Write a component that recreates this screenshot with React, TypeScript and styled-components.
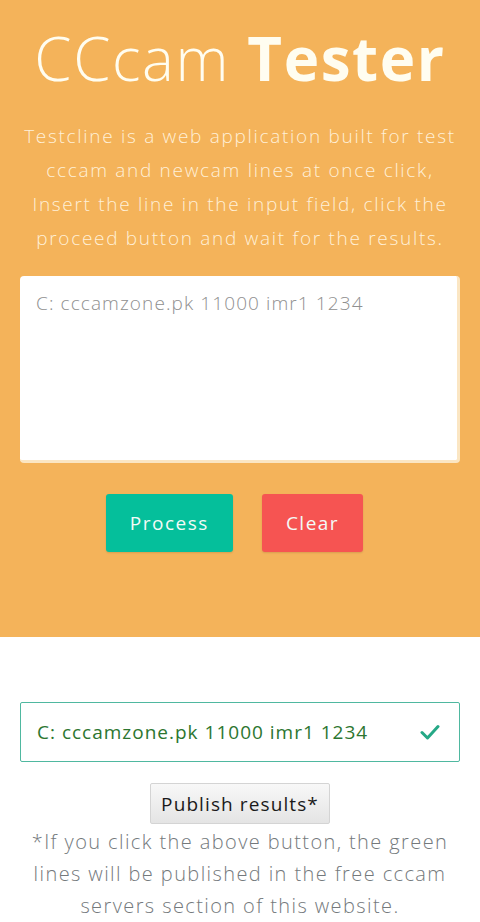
import styled, { createGlobalStyle } from 'styled-components'

const GlobalStyle = createGlobalStyle`
  html, body {
    margin: 0;
    padding: 0;
    background: #ffffff;
  }
  body {
    font-family: "Open Sans", "Noto Sans", sans-serif;
  }
`

const Hero = styled.section`
  background: #f4b35a;
  padding: 20px 20px 85px;
  display: flex;
  flex-direction: column;
  align-items: center;
`

const Title = styled.h1`
  margin: 0;
  font-size: 60px;
  line-height: 76px;
  font-weight: 300;
  letter-spacing: 1.6px;
  color: #fffdf0;
  text-align: center;
  white-space: nowrap;
  strong {
    font-weight: 700;
  }
`

const Intro = styled.p`
  margin: 23px 0 0;
  font-size: 19px;
  line-height: 34px;
  font-weight: 300;
  letter-spacing: 1.7px;
  color: #fff0d8;
  text-align: center;
`

const LineInput = styled.textarea`
  box-sizing: border-box;
  margin-top: 21px;
  width: 100%;
  height: 187px;
  padding: 14px 16px;
  border: none;
  border-right: 3px solid #fbe6c3;
  border-bottom: 3px solid #fbe6c3;
  border-radius: 4px;
  background: #ffffff;
  resize: none;
  font-family: inherit;
  font-size: 19px;
  font-weight: 300;
  letter-spacing: 1.1px;
  color: #555;
  &::placeholder {
    color: #8f8f8f;
  }
`

const Actions = styled.div`
  display: flex;
  gap: 29px;
  margin-top: 31px;
  margin-right: 11px;
`

const ActionButton = styled.button<{ $tone: 'go' | 'stop' }>`
  height: 58px;
  padding: 0 24px;
  border: none;
  border-radius: 3px;
  background: ${p => (p.$tone === 'go' ? '#05bf9b' : '#f65452')};
  color: #f3fbf7;
  font-family: inherit;
  font-size: 19px;
  font-weight: 400;
  letter-spacing: 1.5px;
  box-shadow: 0 1px 2px rgba(0, 0, 0, 0.12);
`

const Results = styled.section`
  padding: 65px 20px 0;
  display: flex;
  flex-direction: column;
  align-items: center;
`

const ResultRow = styled.div`
  box-sizing: border-box;
  width: 100%;
  height: 60px;
  display: flex;
  align-items: center;
  justify-content: space-between;
  padding: 0 19px 0 16px;
  border: 1px solid #4fb8a0;
  border-radius: 2px;
  color: #2c7630;
  font-size: 19px;
  font-weight: 400;
  letter-spacing: 1px;
`

const PublishButton = styled.button`
  margin-top: 21px;
  height: 41px;
  padding: 0 10px;
  border: 1px solid #d4d4d4;
  border-radius: 2px;
  background: linear-gradient(#f8f8f8, #e4e4e4);
  color: #1a1a1a;
  font-family: inherit;
  font-size: 19px;
  font-weight: 400;
  letter-spacing: 1.1px;
`

const Note = styled.p`
  margin: 2px 0 0;
  font-size: 20px;
  line-height: 32px;
  font-weight: 300;
  letter-spacing: 1.4px;
  color: #74797c;
  text-align: center;
`

const Check = () => (
  <svg width="20" height="16" viewBox="0 0 20 16" fill="none">
    <path d="M2 8.5 L7.5 14 L18 2.5" stroke="#25a886" strokeWidth="3" strokeLinecap="round" strokeLinejoin="round" />
  </svg>
)

const App = () => {
  return (
    <>
      <GlobalStyle />
      <Hero>
        <Title>CCcam <strong>Tester</strong></Title>
        <Intro>
          Testcline is a web application built for test cccam and newcam lines at once click,
          Insert the line in the input field, click the proceed button and wait for the results.
        </Intro>
        <LineInput placeholder="C: cccamzone.pk 11000 imr1 1234" />
        <Actions>
          <ActionButton $tone="go">Process</ActionButton>
          <ActionButton $tone="stop">Clear</ActionButton>
        </Actions>
      </Hero>
      <Results>
        <ResultRow>
          <span>C: cccamzone.pk 11000 imr1 1234</span>
          <Check />
        </ResultRow>
        <PublishButton>Publish results*</PublishButton>
        <Note>
          *If you click the above button, the green lines will be published in the free cccam
          servers section of this website.
        </Note>
      </Results>
    </>
  )
}

export default App
